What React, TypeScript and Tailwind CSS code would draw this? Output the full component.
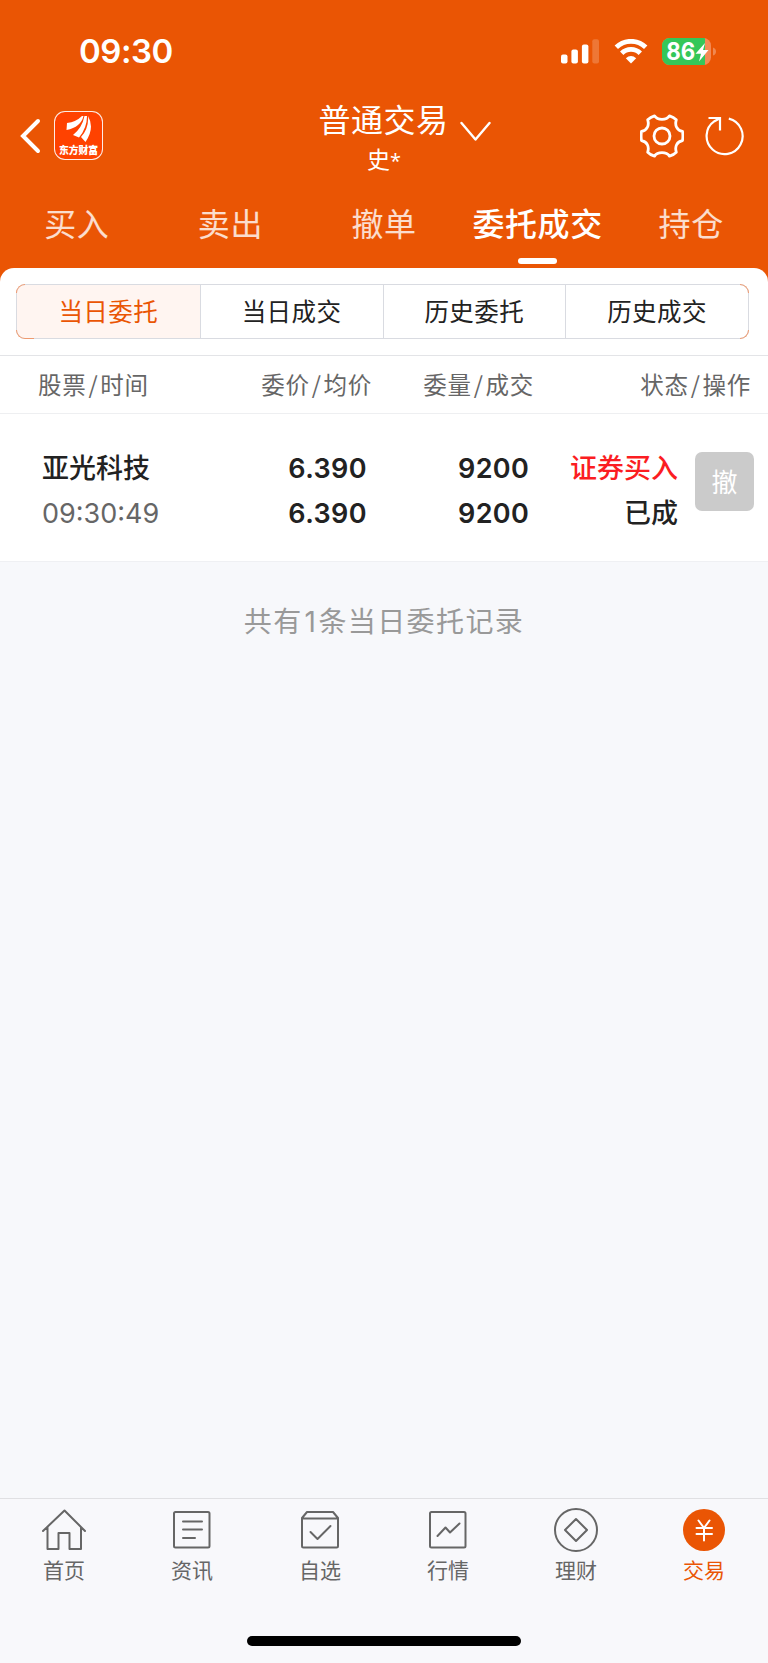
import { ReactNode } from "react";

const tabs = ["买入", "卖出", "撤单", "委托成交", "持仓"];
const segments = ["当日委托", "当日成交", "历史委托", "历史成交"];

const AppLogo = () => (
  <div className="w-[49px] h-[49px] rounded-[11px] border border-white/90 bg-[#ff4200] flex flex-col items-center pt-[3px]">
    <svg width="28" height="28" viewBox="0 0 28 28" fill="#fff">
      <path d="M1.5 15 L2 8 Q11 7 17 1 L18.5 1 Q16 12 1.5 15Z" />
      <path d="M8 20 Q17 13 19.5 1 L22 1 Q22 13 14 22.5Z" />
      <path d="M23 1 Q30 13 20.5 27 L16 22 Q24 13 23 1Z" />
    </svg>
    <span className="mt-[1px] text-[9.8px] leading-[12px] font-black whitespace-nowrap">东方财富</span>
  </div>
);

const StatusBar = () => (
  <div className="h-[102px] flex items-center justify-between pl-[79px] pr-[51px]">
    <span className="font-[Inter] text-[33px] tracking-[-0.5px] font-semibold leading-none">09:30</span>
    <div className="flex items-center gap-[14px]">
      <svg width="39" height="25" viewBox="0 0 39 25" fill="#fff">
        <rect x="0" y="15.5" width="6.5" height="9" rx="2" />
        <rect x="10.4" y="10.5" width="6.5" height="14" rx="2" />
        <rect x="20.9" y="5.5" width="6.5" height="19" rx="2" />
        <rect x="31.3" y="0.3" width="6.7" height="24.2" rx="2" opacity="0.2" />
      </svg>
      <svg width="34" height="25" viewBox="0 0 34 25" fill="none" stroke="#fff" strokeWidth="4.8">
        <path d="M2.3 8.3 A21 21 0 0 1 31.7 8.3" />
        <path d="M7.7 14.3 A13.2 13.2 0 0 1 26.3 14.3" />
        <path d="M17 24.5 L11.8 19.2 Q17 14.8 22.2 19.2Z" fill="#fff" stroke="none" />
      </svg>
      <svg width="55" height="27" viewBox="0 0 55 27">
        <clipPath id="cell"><rect width="49" height="27" rx="7.5" /></clipPath>
        <g clipPath="url(#cell)">
          <rect width="49" height="27" fill="#f38a55" />
          <rect width="43" height="27" fill="#34c759" />
        </g>
        <path d="M51 9.5 Q54 10.5 54 13.5 Q54 16.5 51 17.5Z" fill="#f08850" />
        <text x="4.3" y="22.2" fill="#fff" fontFamily="Inter" fontSize="24" fontWeight="700" textLength="29" lengthAdjust="spacingAndGlyphs">86</text>
        <path d="M43 5 L33.5 15.8 H39 L37 23.5 L46.5 12 H41Z" fill="#fff" />
      </svg>
    </div>
  </div>
);

const TitleBar = () => (
  <div className="h-[82px] flex justify-between">
    <div className="w-[200px] pl-[20px] pt-[9px] flex items-start gap-[13px]">
      <svg className="mt-[7px]" width="21" height="36" viewBox="0 0 21 36" fill="none" stroke="#fff" strokeWidth="4" strokeLinecap="round">
        <path d="M18 3 L3 18 L18 33" strokeLinejoin="miter" />
      </svg>
      <AppLogo />
    </div>
    <div className="-mt-[2px] flex flex-col items-center">
      <div className="flex items-center h-[36px] pl-[41px]">
        <span className="text-[32px] tracking-[0.5px] leading-[36px]">普通交易</span>
        <svg className="ml-[11px] mt-[26px]" width="31" height="21" viewBox="0 0 31 21" fill="none" stroke="#fff" strokeWidth="2.4" strokeLinecap="round" strokeLinejoin="round">
          <path d="M1.5 2 L15.5 18.5 L29.5 2" />
        </svg>
      </div>
      <span className="mt-[9px] text-[23px] leading-[26px]">
        史<span className="font-['Open_Sans'] text-[20px]">*</span>
      </span>
    </div>
    <div className="w-[200px] pr-[24px] pt-[12px] flex items-start justify-end gap-[20px]">
      <svg width="44" height="44" viewBox="0 0 44 44" fill="none" stroke="#fff" strokeWidth="2.8" strokeLinejoin="round">
        <path d="M14.5 1.8 C17.5 6.5 26.5 6.5 29.5 1.8 Q33.5 3 36.3 5.8 C34.5 11.5 37 16.5 42.5 17.5 Q43.3 22 42.5 26.5 C37 27.5 34.5 32.5 36.3 38.2 Q33.5 41 29.5 42.2 C26.5 37.5 17.5 37.5 14.5 42.2 Q10.5 41 7.7 38.2 C9.5 32.5 7 27.5 1.5 26.5 Q0.7 22 1.5 17.5 C7 16.5 9.5 11.5 7.7 5.8 Q10.5 3 14.5 1.8Z" />
        <circle cx="22" cy="22" r="8" />
      </svg>
      <svg width="40" height="44" viewBox="0 0 40 44" fill="none" stroke="#fff" strokeWidth="2.2">
        <path d="M24.8 4.6 A18 18 0 1 1 10.5 7.2 L15.5 4.5" />
        <path d="M4.5 4 H16 V16.5" />
      </svg>
    </div>
  </div>
);

const TabBar = () => (
  <div className="h-[84px] grid grid-cols-5 text-[32px] tracking-[0.6px]">
    {tabs.map((tab) => {
      const active = tab === "委托成交";
      return (
        <div key={tab} className={active ? "flex flex-col items-center font-medium text-white" : "flex flex-col items-center text-white/80 font-normal"}>
          <span className="mt-[18px] h-[40px] leading-[40px] whitespace-nowrap">{tab}</span>
          {active && <span className="mt-[16px] w-[39px] h-[6px] rounded-full bg-white" />}
        </div>
      );
    })}
  </div>
);

const Segments = () => (
  <div className="h-[88px] pl-4 pr-[19px] pt-4 border-b border-[#e3e4e7]">
    <div className="relative">
      <div className="h-[55px] grid grid-cols-4 rounded-[9px] border border-[#d9dbe1] overflow-hidden">
        {segments.map((name, i) => (
          <div
            key={name}
            className={
              i === 0
                ? "flex items-center justify-center text-[24.5px] tracking-[0.5px] bg-[#fff5f1] text-[#ea5504]"
                : "flex items-center justify-center text-[24.5px] tracking-[0.5px] border-l border-[#d9dbe1] text-[#222]"
            }
          >
            {name}
          </div>
        ))}
      </div>
      {/* tinted corners */}
      <span className="absolute left-0 top-0 w-[9px] h-[9px] border-l border-t border-[#ee9a70] rounded-tl-[9px]" />
      <span className="absolute left-0 bottom-0 w-[18px] h-[9px] border-l border-b border-[#ee9a70] rounded-bl-[9px]" />
      <span className="absolute right-0 top-0 w-[9px] h-[9px] border-r border-t border-[#ee9a70] rounded-tr-[9px]" />
      <span className="absolute right-0 bottom-0 w-[9px] h-[9px] border-r border-b border-[#ee9a70] rounded-br-[9px]" />
    </div>
  </div>
);

const HeadCell = ({ a, b }: { a: string; b: string }) => (
  <>
    {a}
    <span className="mx-[2px]">/</span>
    {b}
  </>
);

const OrderTable = () => (
  <div>
    <div className="h-[58px] border-b border-[#eeeff1] flex items-center text-[23.5px] tracking-[0.7px] text-[#666] pl-[38px] pr-[17px]">
      <span className="w-[140px]"><HeadCell a="股票" b="时间" /></span>
      <span className="w-[194px] text-right"><HeadCell a="委价" b="均价" /></span>
      <span className="w-[162px] text-right"><HeadCell a="委量" b="成交" /></span>
      <span className="flex-1 text-right"><HeadCell a="状态" b="操作" /></span>
    </div>
    <div className="h-[148px] border-b border-[#eff0f3] flex items-start pl-[42px] pr-[14px] pt-[32px] text-[27px] leading-[45px] text-[#222]">
      <div className="w-[140px]">
        <p className="font-medium -mt-[2px] mb-[2px]">亚光科技</p>
        <p className="font-[Inter] text-[#666]">09:30:49</p>
      </div>
      <div className="w-[185px] text-right font-[Inter] font-semibold tracking-[0.4px]">
        <p>6.390</p>
        <p>6.390</p>
      </div>
      <div className="w-[162px] text-right font-[Inter] font-semibold tracking-[0.3px]">
        <p>9200</p>
        <p>9200</p>
      </div>
      <div className="flex-1 -mt-[2px] text-right font-medium">
        <p className="text-[#fb1d22]">证券买入</p>
        <p>已成</p>
      </div>
      <button className="ml-[17px] mt-[6px] pb-[2px] w-[59px] h-[59px] rounded-[7px] bg-[#cbcbcb] text-white text-[26px] leading-none">撤</button>
    </div>
  </div>
);

const NavItem = ({ label, active, children }: { label: string; active?: boolean; children: ReactNode }) => (
  <div className={active ? "flex flex-col items-center text-[#ea5504]" : "flex flex-col items-center text-[#666]"}>
    <svg className="mt-[8px]" width="46" height="46" viewBox="0 0 46 46" fill="none" stroke="currentColor" strokeWidth="2" strokeLinecap="round" strokeLinejoin="round">
      {children}
    </svg>
    <span className="mt-[2px] text-[21px] leading-[28px]">{label}</span>
  </div>
);

const BottomNav = () => (
  <div className="h-[165px] border-t border-[#e0e0e3] bg-[#f8f8fb] flex flex-col items-center">
    <div className="h-[137px] w-full grid grid-cols-6">
      <NavItem label="首页">
        <path d="M2 24 L23.5 3.500 L44 24 M6.5 20 V42 H17.5 V26 H28.5 V42 H40 V20" />
      </NavItem>
      <NavItem label="资讯">
        <rect x="5" y="5" width="35.5" height="35.5" rx="1.5" />
        <path d="M14 14.5 H33 M14 22.5 H33 M14 31 H26" />
      </NavItem>
      <NavItem label="自选">
        <path d="M5 11 L10 5 H36 L41 11 V39 Q41 40.5 39.5 40.5 H6.5 Q5 40.5 5 39Z M5 11.5 H41" />
        <path d="M13.5 25 L20.5 32 L33.5 19" />
      </NavItem>
      <NavItem label="行情">
        <rect x="5" y="5" width="35.5" height="35.5" rx="1.5" />
        <path d="M12.5 29 L20.5 20.5 L25 25.5 L34.5 16.5" />
      </NavItem>
      <NavItem label="理财">
        <circle cx="23" cy="23" r="21" />
        <path d="M23 12 L34 23 L23 34 L12 23Z" />
      </NavItem>
      <NavItem label="交易" active>
        <circle cx="23" cy="23" r="21" fill="#ea5504" stroke="none" />
        <path d="M17.5 13.5 L23 21 L28.5 13.5 M23 21 V33.5 M15.5 21 H31 M15.5 27 H31" stroke="#fff" />
      </NavItem>
    </div>
    <div className="w-[274px] h-[10px] rounded-full bg-black" />
  </div>
);

const App = () => (
  <div className="w-[768px] h-[1663px] flex flex-col overflow-hidden bg-[#f7f8fb] font-['Noto_Sans_CJK_SC',sans-serif]">
    <header className="bg-[#ea5504] text-white">
      <StatusBar />
      <TitleBar />
      <TabBar />
    </header>
    <main className="flex-1 flex flex-col">
      <div className="bg-[#ea5504]">
        <div className="bg-white rounded-t-[14px]">
          <Segments />
        </div>
      </div>
      <div className="bg-white">
        <OrderTable />
      </div>
      <p className="mt-[38px] text-center text-[28px] leading-[40px] tracking-[1.4px] text-[#999]">
        共有<span className="font-[Inter] ml-[2px] mr-px">1</span>条当日委托记录
      </p>
    </main>
    <BottomNav />
  </div>
);

export default App;
